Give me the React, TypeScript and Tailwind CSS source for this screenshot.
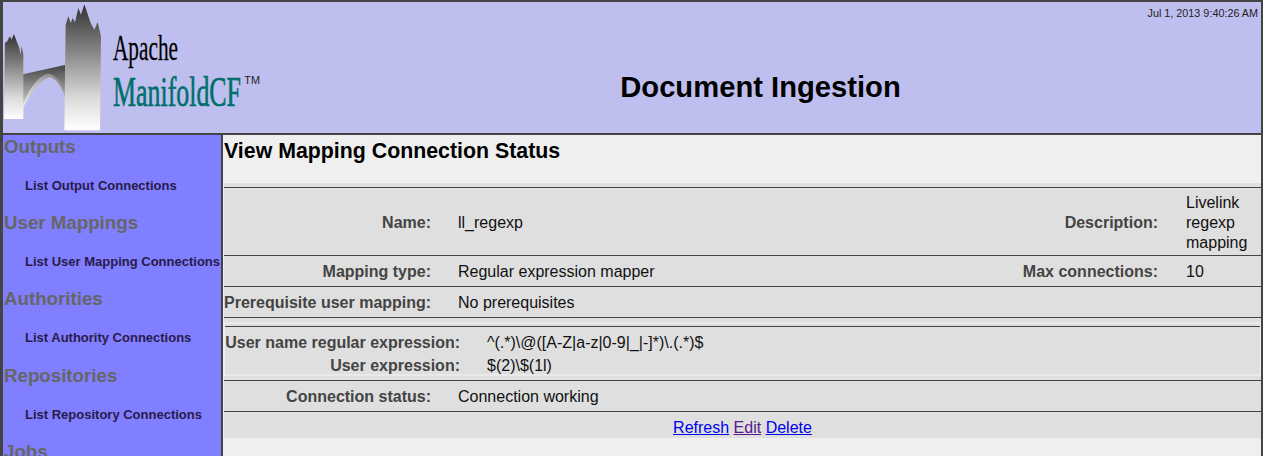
const arial = "font-['Liberation_Sans',Arial,sans-serif]";

function Logo() {
  return (
    <svg width="261" height="130" viewBox="9 7 783 390" className="shrink-0">
      <defs>
        <linearGradient id="t" x1="0" y1="0" x2="0" y2="1">
          <stop offset="0" stopColor="#333333" />
          <stop offset="0.35" stopColor="#808080" />
          <stop offset="0.75" stopColor="#dcdcdc" />
          <stop offset="1" stopColor="#ffffff" />
        </linearGradient>
        <linearGradient id="a" x1="0" y1="0" x2="0" y2="1">
          <stop offset="0" stopColor="#444444" />
          <stop offset="0.5" stopColor="#a0a0a0" />
          <stop offset="1" stopColor="#f4f4f4" />
        </linearGradient>
        <linearGradient id="b" x1="1" y1="0" x2="0" y2="1">
          <stop offset="0" stopColor="#777777" />
          <stop offset="0.5" stopColor="#c8c8c8" />
          <stop offset="1" stopColor="#fafafa" />
        </linearGradient>
      </defs>
      <path d="M62 225L195 196L195 290C180 250 165 232 145 230C110 240 80 290 55 358L40 358Z" fill="url(#a)" />
      <path d="M55 358C80 300 110 245 150 232C170 238 185 260 195 290L195 270C180 240 165 225 145 222C105 232 78 285 50 358Z" fill="url(#b)" />
      <path d="M12 358L15 130L22 125L25 118L30 110L34 120L42 103L50 125L58 145L62 165L65 140L70 165L70 358Z" fill="url(#t)" />
      <path d="M193 392L197 75L205 50L212 70L218 55L225 68L235 25L243 45L253 14L262 40L272 70L283 90L293 68L303 110L300 392Z" fill="url(#t)" />
      <text x="339" y="180" fontFamily="'Liberation Serif', serif" fontSize="106" textLength="195" lengthAdjust="spacingAndGlyphs" fill="#000000" stroke="#000000" strokeWidth="0.8">Apache</text>
      <text x="339" y="318" fontFamily="'Liberation Serif', serif" fontSize="126" textLength="384" lengthAdjust="spacingAndGlyphs" fill="#006f6b" stroke="#006f6b" strokeWidth="2">ManifoldCF</text>
      <text x="733" y="252" fontFamily="'Liberation Sans', sans-serif" fontSize="33" textLength="47" lengthAdjust="spacingAndGlyphs" fill="#222222">TM</text>
    </svg>
  );
}

const nav = [
  ["Outputs", "List Output Connections"],
  ["User Mappings", "List User Mapping Connections"],
  ["Authorities", "List Authority Connections"],
  ["Repositories", "List Repository Connections"],
  ["Jobs", ""],
];

function Label({ children }: { children: React.ReactNode }) {
  return <div className="whitespace-nowrap text-right font-bold text-[#444444]">{children}</div>;
}

export default function App() {
  return (
    <div className={`${arial} flex h-[456px] w-[1263px] flex-col overflow-hidden border-t-[2.5px] border-r-2 border-l-[3px] border-[#444444] text-black`}>
      <header className="box-content flex h-[130.5px] shrink-0 border-b-2 border-[#444444] bg-[#bfbfef]">
        <Logo />
        <div className="flex flex-1 flex-col">
          <div className="h-[16px] pt-[5px] pr-[3px] text-right text-[10.8px] leading-[12px] text-[#222222]">Jul 1, 2013 9:40:26 AM</div>
          <div className="flex flex-1 items-center justify-center pt-[23px] pr-[4px] text-[29.2px] leading-[34px] font-bold">Document Ingestion</div>
        </div>
      </header>
      <div className="flex min-h-0 flex-1">
        <nav className="box-content w-[218px] shrink-0 border-r-2 border-[#444444] bg-[#7f7fff]">
          {nav.map(([h, item]) => (
            <div key={h} className="h-[76.4px]">
              <div className="h-[24px] pl-[1px] text-[18.72px] leading-[24px] font-bold text-[#666666]">{h}</div>
              {item && <div className="pt-[20px] pl-[22px] text-[13px] leading-[14px] font-bold whitespace-nowrap text-[#2a1a4a]">{item}</div>}
            </div>
          ))}
        </nav>
        <main className="flex-1 bg-[#efefef] pl-[1px] text-[16px] text-[#111111]">
          <h1 className="h-[48px] pt-[4px] text-[21.33px] leading-[24px] font-bold text-black">View Mapping Connection Status</h1>
          <div className="h-[255px] bg-[#dfdfdf]">
            <div className="h-[4px]" />
            <div className="grid h-[69px] grid-cols-[207px_581px_146px_1fr] items-center border-y border-[#444444] pt-[4px]">
              <Label>Name:</Label>
              <div className="pl-[27px]">ll_regexp</div>
              <Label>Description:</Label>
              <div className="pr-[4px] pl-[28px] leading-[20px]">Livelink regexp mapping</div>
            </div>
            <div className="grid h-[31px] grid-cols-[207px_581px_146px_1fr] items-center border-b border-[#444444] pt-[3px]">
              <Label>Mapping type:</Label>
              <div className="pl-[27px]">Regular expression mapper</div>
              <Label>Max connections:</Label>
              <div className="pl-[28px]">10</div>
            </div>
            <div className="grid h-[31px] grid-cols-[207px_1fr] items-center border-b border-[#444444] pt-[3px]">
              <Label>Prerequisite user mapping:</Label>
              <div className="pl-[27px]">No prerequisites</div>
            </div>
            <div className="h-[4px]" />
            <div className="h-[54px] border-x border-y-2 border-x-[#efefef] border-y-[#e9e9e9] pt-[2px]">
              <div className="h-full border-t border-[#444444] pt-[4px]">
                <div className="grid grid-cols-[235px_1fr] leading-[23px]">
                  <Label>User name regular expression:</Label>
                  <div className="pl-[27px]">^(.*)\@([A-Z|a-z|0-9|_|-]*)\.(.*)$</div>
                  <Label>User expression:</Label>
                  <div className="pl-[27px]">$(2)\$(1l)</div>
                </div>
              </div>
            </div>
            <div className="h-[4px]" />
            <div className="grid h-[32px] grid-cols-[207px_1fr] items-center border-y border-[#444444] pt-[2px]">
              <Label>Connection status:</Label>
              <div className="pl-[27px]">Connection working</div>
            </div>
            <div className="pt-[6px] text-center leading-[19px]">
              <a className="text-[#0000ee] underline" href="#">Refresh</a>{" "}
              <a className="text-[#551a8b] underline" href="#">Edit</a>{" "}
              <a className="text-[#0000ee] underline" href="#">Delete</a>
            </div>
          </div>
        </main>
      </div>
    </div>
  );
}
